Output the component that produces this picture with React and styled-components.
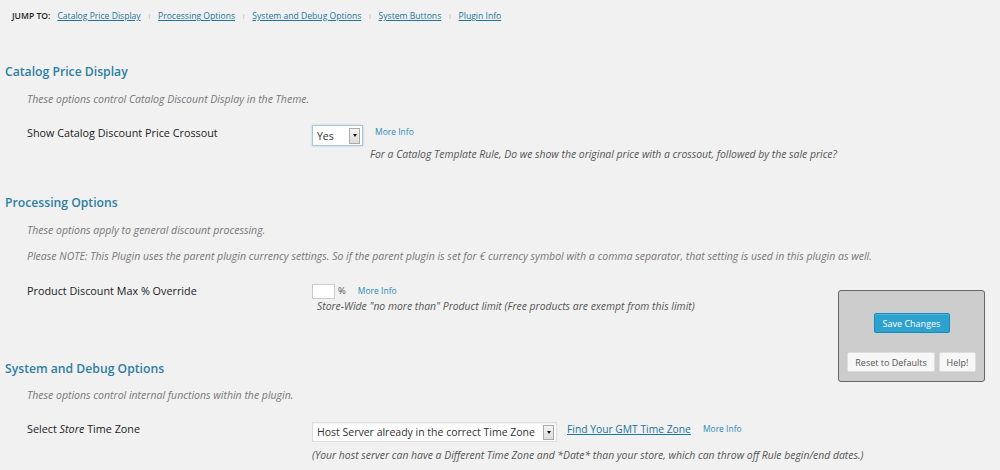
import React from 'react';
import styled, { createGlobalStyle } from 'styled-components';

const Global = createGlobalStyle`
  html, body {
    margin: 0;
    padding: 0;
    background: #f1f1f1;
    font-family: "Open Sans", "DejaVu Sans", sans-serif;
    color: #222;
  }
`;

const Page = styled.div`
  position: relative;
  width: 1000px;
  height: 470px;
  overflow: hidden;
  padding: 0 5px;
  box-sizing: border-box;
`;

const JumpBar = styled.div`
  margin-top: 10px;
  padding-left: 7px;
  display: flex;
  align-items: center;
  font-size: 8.6px;
  line-height: 12px;
  color: #222;
`;

const JumpLabel = styled.span`
  font-weight: 600;
  margin-right: 7px;
`;

const JumpLink = styled.a`
  color: #21759b;
  text-decoration: underline;
`;

const Sep = styled.span`
  color: #999;
  font-size: 6px;
  margin: 0 7px;
`;

const Heading = styled.h3`
  margin: ${p => p.$top}px 0 0;
  font-size: 12.2px;
  font-weight: 600;
  line-height: 18px;
  color: #2d7ea3;
`;

const Desc = styled.p`
  margin: ${p => p.$top}px 0 0 22px;
  font-size: 10.5px;
  line-height: 14px;
  font-style: italic;
  color: #777;
  white-space: nowrap;
`;

const Row = styled.div`
  display: grid;
  grid-template-columns: 285px 1fr;
  margin: ${p => p.$top}px 0 0 22px;
`;

const Label = styled.div`
  font-size: 10.8px;
  line-height: 14px;
  padding-top: ${p => p.$pad || 0}px;
  color: #222;
  em { font-style: italic; }
`;

const Field = styled.div`
  display: flex;
  flex-direction: column;
`;

const Controls = styled.div`
  display: flex;
  align-items: flex-start;
`;

const FakeSelect = styled.div`
  width: ${p => p.$w}px;
  height: ${p => p.$h}px;
  box-sizing: border-box;
  background: #fff;
  border: 1px solid ${p => (p.$focus ? '#a9c7dc' : '#ddd')};
  box-shadow: ${p => (p.$focus ? '0 0 2px rgba(30,140,190,.35)' : 'inset 0 1px 2px rgba(0,0,0,.07)')};
  display: flex;
  align-items: center;
  justify-content: space-between;
  padding: 0 2px 0 4px;
  font-size: 10.5px;
  color: #333;
`;

const Arrow = styled.span`
  width: 11px;
  height: ${p => p.$h}px;
  box-sizing: border-box;
  border: 1px solid #aaa;
  background: linear-gradient(#f4f4f4, #dcdcdc);
  display: flex;
  align-items: center;
  justify-content: center;
  &::after {
    content: '';
    border-left: 2.5px solid transparent;
    border-right: 2.5px solid transparent;
    border-top: 3px solid #111;
  }
`;

const SmallInput = styled.div`
  width: 23px;
  height: 15px;
  box-sizing: border-box;
  background: #fff;
  border: 1px solid #ccc;
`;

const Pct = styled.span`
  font-size: 9.5px;
  line-height: 14px;
  color: #555;
  margin-left: 3px;
`;

const MoreInfo = styled.a`
  font-size: 8.5px;
  line-height: 12px;
  color: #2b8cb8;
  margin-left: ${p => p.$left}px;
  margin-top: ${p => p.$top || 0}px;
  text-decoration: none;
`;

const GmtLink = styled.a`
  font-size: 10.3px;
  line-height: 14px;
  color: #21759b;
  text-decoration: underline;
  margin-left: 10px;
`;

const Note = styled.div`
  font-size: 10.4px;
  line-height: 14px;
  font-style: italic;
  color: #555;
  margin-top: ${p => p.$top || 0}px;
  margin-left: ${p => p.$left || 0}px;
  white-space: nowrap;
`;

const ButtonBox = styled.div`
  position: absolute;
  left: 838px;
  top: 290px;
  width: 147px;
  height: 92px;
  box-sizing: border-box;
  background: #cccccc;
  border: 1px solid #666;
  border-radius: 3px;
  display: flex;
  flex-direction: column;
  align-items: center;
  padding-top: 22px;
`;

const PrimaryButton = styled.button`
  height: 20px;
  width: 76px;
  padding: 0;
  background: #2ea2cc;
  border: 1px solid #0f8fbd;
  border-radius: 2px;
  color: #fff;
  font-family: inherit;
  font-size: 9px;
  box-shadow: inset 0 1px 0 rgba(120,200,230,.5);
`;

const ButtonRow = styled.div`
  display: flex;
  gap: 4px;
  margin-top: 19px;
`;

const SecondaryButton = styled.button`
  height: 20px;
  width: ${p => p.$w}px;
  padding: 0;
  background: #f7f7f7;
  border: 1px solid #ddd;
  border-radius: 2px;
  color: #555;
  font-family: inherit;
  font-size: 9px;
`;

export default function App() {
  return (
    <Page>
      <Global />
      <JumpBar>
        <JumpLabel>JUMP TO:</JumpLabel>
        <JumpLink>Catalog Price Display</JumpLink>
        <Sep>|</Sep>
        <JumpLink>Processing Options</JumpLink>
        <Sep>|</Sep>
        <JumpLink>System and Debug Options</JumpLink>
        <Sep>|</Sep>
        <JumpLink>System Buttons</JumpLink>
        <Sep>|</Sep>
        <JumpLink>Plugin Info</JumpLink>
      </JumpBar>

      <Heading $top={41}>Catalog Price Display</Heading>
      <Desc $top={11}>These options control Catalog Discount Display in the Theme.</Desc>
      <Row $top={19}>
        <Label $pad={1}>Show Catalog Discount Price Crossout</Label>
        <Field>
          <Controls>
            <FakeSelect $w={51} $h={21} $focus>
              Yes
              <Arrow $h={16} />
            </FakeSelect>
            <MoreInfo $left={12} $top={1}>More Info</MoreInfo>
          </Controls>
          <Note $top={1} $left={58}>
            For a Catalog Template Rule, Do we show the original price with a crossout, followed by the sale price?
          </Note>
        </Field>
      </Row>

      <Heading $top={33}>Processing Options</Heading>
      <Desc $top={11}>These options apply to general discount processing.</Desc>
      <Desc $top={12}>
        Please NOTE: This Plugin uses the parent plugin currency settings. So if the parent plugin is set for € currency symbol with a comma separator, that setting is used in this plugin as well.
      </Desc>
      <Row $top={21}>
        <Label>Product Discount Max % Override</Label>
        <Field>
          <Controls>
            <SmallInput />
            <Pct>%</Pct>
            <MoreInfo $left={12} $top={1}>More Info</MoreInfo>
          </Controls>
          <Note $top={0} $left={5}>
            Store-Wide "no more than" Product limit (Free products are exempt from this limit)
          </Note>
        </Field>
      </Row>

      <Heading $top={47}>System and Debug Options</Heading>
      <Desc $top={10}>These options control internal functions within the plugin.</Desc>
      <Row $top={20}>
        <Label>
          Select <em>Store</em> Time Zone
        </Label>
        <Field>
          <Controls>
            <FakeSelect $w={245} $h={20}>
              Host Server already in the correct Time Zone
              <Arrow $h={15} />
            </FakeSelect>
            <GmtLink>Find Your GMT Time Zone</GmtLink>
            <MoreInfo $left={12} $top={1}>More Info</MoreInfo>
          </Controls>
          <Note $top={6}>
            (Your host server can have a Different Time Zone and *Date* than your store, which can throw off Rule begin/end dates.)
          </Note>
        </Field>
      </Row>

      <ButtonBox>
        <PrimaryButton>Save Changes</PrimaryButton>
        <ButtonRow>
          <SecondaryButton $w={88}>Reset to Defaults</SecondaryButton>
          <SecondaryButton $w={37}>Help!</SecondaryButton>
        </ButtonRow>
      </ButtonBox>
    </Page>
  );
}
